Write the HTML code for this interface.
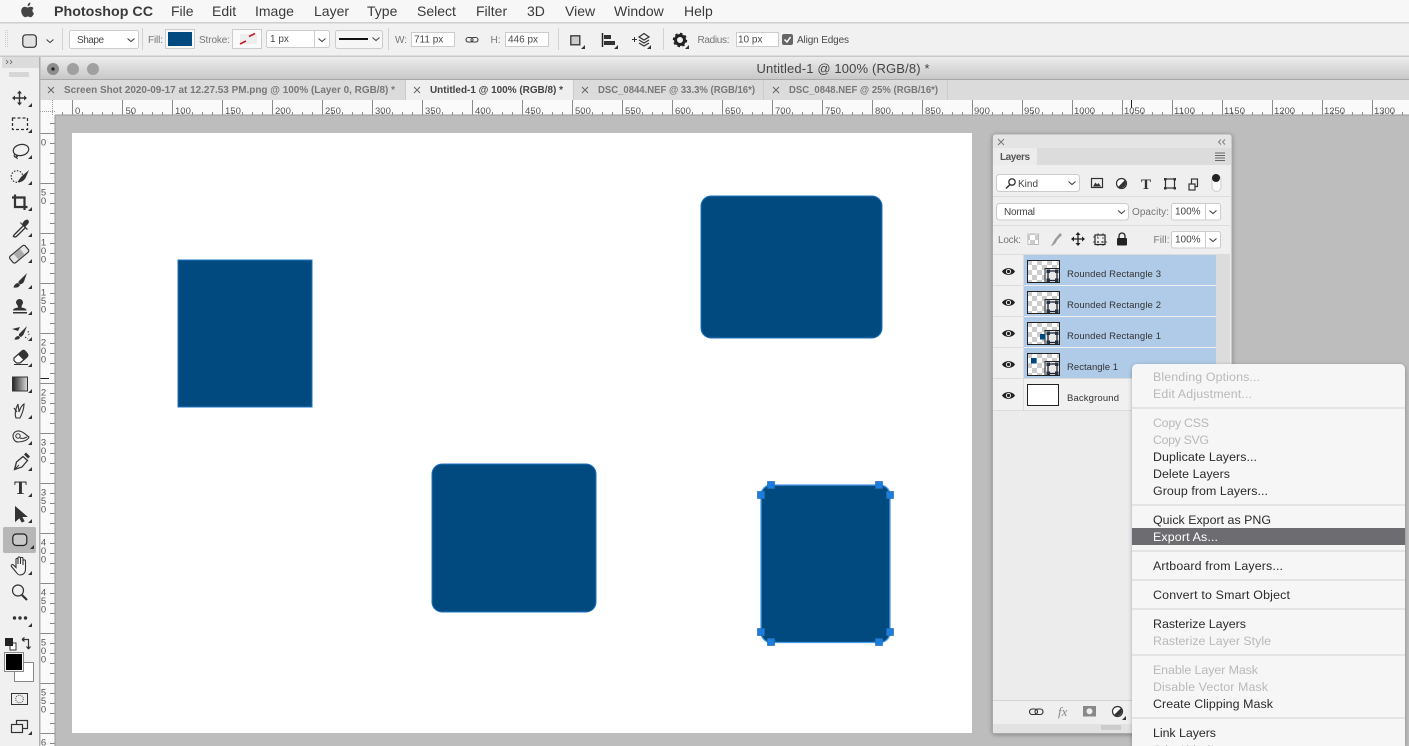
<!DOCTYPE html>
<html><head><meta charset="utf-8"><title>Photoshop CC</title>
<style>
html,body{margin:0;padding:0;width:1409px;height:746px;overflow:hidden;background:#bdbdbd}
svg{display:block;font-family:"Liberation Sans",sans-serif;filter:blur(.3px)}
.m{font-size:14px;fill:#3a3a3a}
.o{font-size:10px;fill:#4a4a4a}
.ol{font-size:10px;fill:#777}
.t{font-size:10px;font-weight:bold;fill:#777}
.r{font-size:9.5px;fill:#555}
.v{font-size:9.5px;fill:#555;text-anchor:middle}
.l{font-size:9.5px;fill:#333}
.c{font-size:12.4px;fill:#2a2a2a}
.d{font-size:12.4px;fill:#b9b9b9}
.ic{fill:none;stroke:#333;stroke-width:1.5}
.k{fill:#333}
</style></head><body>
<svg width="1409" height="746" viewBox="0 0 1409 746" xmlns="http://www.w3.org/2000/svg">
<defs>
<pattern id="hm" x="72" y="112" width="10" height="3" patternUnits="userSpaceOnUse"><rect width="1" height="3" fill="#888"/></pattern>
<pattern id="hM" x="72" y="100" width="50" height="15" patternUnits="userSpaceOnUse"><rect width="1" height="15" fill="#8a8a8a"/></pattern>
<pattern id="vm" x="50" y="133" width="5" height="10" patternUnits="userSpaceOnUse"><rect width="5" height="1" fill="#888"/></pattern>
<pattern id="vM" x="40" y="133" width="15" height="50" patternUnits="userSpaceOnUse"><rect width="15" height="1" fill="#8a8a8a"/></pattern>
<pattern id="ck" width="10" height="10" patternUnits="userSpaceOnUse"><rect width="10" height="10" fill="#fff"/><rect width="5" height="5" fill="#ccc"/><rect x="5" y="5" width="5" height="5" fill="#ccc"/></pattern>
<linearGradient id="tb" x1="0" y1="0" x2="0" y2="1"><stop offset="0" stop-color="#ececec"/><stop offset="1" stop-color="#c8c8c8"/></linearGradient>
<linearGradient id="gr" x1="0" y1="0" x2="1" y2="0"><stop offset="0" stop-color="#222"/><stop offset="1" stop-color="#ddd"/></linearGradient>
<filter id="sh" x="-10%" y="-10%" width="120%" height="120%"><feDropShadow dx="0" dy="1" stdDeviation="2" flood-color="#000" flood-opacity=".3"/></filter>
<g id="thumb"><rect x=".5" y=".5" width="32" height="22" fill="url(#ck)" stroke="#222"/><rect x="18" y="8.500" width="14.500" height="14" fill="#e8e8e8" stroke="#222"/><rect x="21" y="11" width="9" height="9.500" fill="none" stroke="#223" stroke-width="1.300"/><rect x="19.500" y="9.500" width="3.500" height="3.500" fill="#234"/><rect x="28" y="9.500" width="3.500" height="3.500" fill="#234"/><rect x="19.500" y="18.500" width="3.500" height="3.500" fill="#234"/><rect x="28" y="18.500" width="3.500" height="3.500" fill="#234"/></g>
<g id="eye"><path d="M-6.500 0C-4 -4.500 4 -4.500 6.500 0C4 4.500 -4 4.500 -6.500 0Z" fill="#222"/><circle r="2.600" fill="#eee"/><circle r="1.600" fill="#222"/></g>
<path id="tri" d="M0 0V-4L-4 0Z" fill="#333"/>
<path id="chev" d="M-3.500 -1.500L0 1.500L3.500 -1.500" fill="none" stroke="#444" stroke-width="1.100"/>
</defs>

<!-- base -->
<rect width="1409" height="746" fill="#bdbdbd"/>
<!-- menu bar -->
<rect width="1409" height="22" fill="#f7f7f7"/>
<rect y="22" width="1409" height="1.500" fill="#cfcfcf"/>
<path d="M30.500 6.800C29.300 6.800 28.700 7.500 27.700 7.500C26.700 7.500 26 6.800 24.800 6.800C23 6.800 21.200 8.300 21.200 11C21.200 13.800 23.500 17.200 25.200 17.200C26.200 17.200 26.700 16.500 27.900 16.500C29.100 16.500 29.500 17.200 30.500 17.200C32 17.200 33.400 14.900 34 13.200C32.400 12.500 31.700 9.500 33.600 8.200C32.900 7.200 31.700 6.800 30.500 6.800ZM30.300 2.500C28.800 2.700 27.500 4.100 27.700 6.200C29.200 6.200 30.600 4.600 30.300 2.500Z" fill="#444"/>
<text x="54" y="16" font-size="14" font-weight="bold" fill="#3a3a3a" textLength="99" lengthAdjust="spacingAndGlyphs">Photoshop CC</text>
<text class="m" x="171" y="16">File</text>
<text class="m" x="212" y="16">Edit</text>
<text class="m" x="255" y="16">Image</text>
<text class="m" x="314" y="16">Layer</text>
<text class="m" x="367" y="16">Type</text>
<text class="m" x="417" y="16">Select</text>
<text class="m" x="476" y="16">Filter</text>
<text class="m" x="527" y="16">3D</text>
<text class="m" x="565" y="16">View</text>
<text class="m" x="614" y="16">Window</text>
<text class="m" x="684" y="16">Help</text>

<!-- options bar -->
<rect y="23.500" width="1409" height="32" fill="#f1f1f1"/>
<rect y="55.500" width="1409" height="1.500" fill="#c9c9c9"/>
<path d="M5.500 30V48M7.500 30V48" stroke="#ccc" stroke-dasharray="1 1"/>
<rect x="22.800" y="34.800" width="13.500" height="12.500" rx="3" fill="#e2e2e2" stroke="#333" stroke-width="1.200"/>
<use href="#chev" x="50" y="41"/>
<path d="M62.500 28V50M142.500 28V50M388.500 28V50M558.500 28V50M663.500 28V50" stroke="#d2d2d2"/>
<rect x="69.500" y="30.500" width="69" height="18" rx="2" fill="#fff" stroke="#ccc"/>
<text class="o" x="77" y="43" textLength="27">Shape</text>
<use href="#chev" x="131" y="40"/>
<text class="ol" x="148" y="43" textLength="15">Fill:</text>
<rect x="165.500" y="29.500" width="29" height="19" fill="#f8f8f8" stroke="#ccc"/>
<rect x="168" y="32" width="24" height="14" fill="#004a80"/>
<text class="ol" x="199" y="43" textLength="31">Stroke:</text>
<rect x="232.500" y="29.500" width="29" height="19" fill="#fafafa" stroke="#ccc"/>
<rect x="240" y="34" width="17" height="10" fill="#eee"/>
<path d="M240 44L246 41M249 36.500L255 33.500" stroke="#c8202a" stroke-width="1.800"/>
<rect x="266.500" y="30.500" width="63" height="17" rx="2" fill="#fff" stroke="#ccc"/>
<path d="M314.500 31V47" stroke="#ccc"/>
<text class="o" x="270" y="42">1 px</text>
<use href="#chev" x="322" y="40"/>
<rect x="335.500" y="30.500" width="47" height="18" rx="2" fill="#f6f6f6" stroke="#ccc"/>
<rect x="339" y="38" width="29" height="2" fill="#111"/>
<use href="#chev" x="376" y="39"/>
<text class="ol" x="395" y="43">W:</text>
<rect x="411.500" y="32.500" width="43" height="14" fill="#fff" stroke="#ccc"/>
<text class="o" x="414" y="42.500">711 px</text>
<g fill="none" stroke="#444" stroke-width="1.100"><rect x="466" y="37.500" width="7" height="4.500" rx="2.200"/><rect x="471" y="37.500" width="7" height="4.500" rx="2.200"/></g>
<text class="ol" x="490.500" y="43">H:</text>
<rect x="505.500" y="32.500" width="43" height="14" fill="#fff" stroke="#ccc"/>
<text class="o" x="508" y="42.500">446 px</text>
<rect x="570.800" y="35.800" width="9" height="9" fill="#ccc" stroke="#333" stroke-width="1.300"/>
<use href="#tri" x="585" y="49"/>
<path d="M602.500 33V47" stroke="#222" stroke-width="1.500"/><rect x="604" y="35" width="7" height="4" fill="#333"/><rect x="604" y="41" width="11" height="4" fill="#333"/>
<use href="#tri" x="618" y="49"/>
<g fill="none" stroke="#333" stroke-width="1.200"><path d="M639 37L644 33.500L649 37L644 40Z"/><path d="M639 40L644 43L649 40"/><path d="M639 43L644 46L649 43"/></g><path d="M632 39.500H637M634.500 37V42" stroke="#333"/>
<use href="#tri" x="651" y="49"/>
<circle cx="680" cy="40" r="4.500" fill="none" stroke="#222" stroke-width="3"/>
<circle cx="680" cy="40" r="6.300" fill="none" stroke="#222" stroke-width="1.800" stroke-dasharray="2.500 2.400"/>
<use href="#tri" x="689" y="49"/>
<text class="ol" x="697.500" y="43" textLength="32">Radius:</text>
<rect x="736.500" y="32.500" width="42" height="14" fill="#fff" stroke="#ccc"/>
<text class="o" x="738" y="42.500">10 px</text>
<rect x="782" y="34" width="11" height="11" rx="2" fill="#666"/>
<path d="M784.500 39.500L787 42L790.500 37" fill="none" stroke="#fff" stroke-width="1.500"/>
<text class="o" x="797" y="43" textLength="52">Align Edges</text>

<!-- doc title -->
<rect x="40" y="57" width="1369" height="22" fill="url(#tb)"/>
<rect x="40" y="79" width="1369" height="1" fill="#a8a8a8"/>
<circle cx="53" cy="69" r="6" fill="#8d8d8d"/><circle cx="53" cy="69" r="1.600" fill="#222"/>
<circle cx="73" cy="69" r="6" fill="#a0a0a0"/><circle cx="93" cy="69" r="6" fill="#a0a0a0"/>
<text x="756.500" y="73" font-size="13" fill="#444" textLength="173">Untitled-1 @ 100% (RGB/8) *</text>

<!-- tabs -->
<rect x="40" y="80" width="1369" height="20" fill="#dbdbdb"/>
<rect x="406" y="80" width="167" height="20" fill="#efefef"/>
<path d="M405.500 80V100M573.500 80V100M763.500 80V100M947.500 80V100" stroke="#cbcbcb"/>
<g stroke="#666" stroke-width="1" fill="none"><path d="M48 87L54 93M54 87L48 93"/><path d="M414 87L420 93M420 87L414 93"/><path d="M582 87L588 93M588 87L582 93"/><path d="M773 87L779 93M779 87L773 93"/></g>
<text class="t" x="64" y="93" textLength="331" lengthAdjust="spacingAndGlyphs">Screen Shot 2020-09-17 at 12.27.53 PM.png @ 100% (Layer 0, RGB/8) *</text>
<text class="t" x="430" y="93" textLength="133" lengthAdjust="spacingAndGlyphs" style="fill:#444">Untitled-1 @ 100% (RGB/8) *</text>
<text class="t" x="598" y="93" textLength="157" lengthAdjust="spacingAndGlyphs">DSC_0844.NEF @ 33.3% (RGB/16*)</text>
<text class="t" x="789" y="93" textLength="149" lengthAdjust="spacingAndGlyphs">DSC_0848.NEF @ 25% (RGB/16*)</text>

<!-- horizontal ruler -->
<rect x="40" y="100" width="1369" height="15" fill="#fafafa"/>
<rect x="55" y="112" width="1354" height="3" fill="url(#hm)"/>
<rect x="55" y="100" width="1354" height="15" fill="url(#hM)"/>
<path d="M40 111.500H55M52.500 100V115" stroke="#999" stroke-dasharray="1 1"/>
<rect x="55" y="114.500" width="1354" height="1" fill="#999"/>
<rect x="1131" y="100" width="1" height="8" fill="#222"/>
<text class="r" x="75" y="114">0</text><text class="r" x="125.500" y="114">50</text><text class="r" x="175" y="114">100</text><text class="r" x="225" y="114">150</text><text class="r" x="275" y="114">200</text><text class="r" x="325" y="114">250</text><text class="r" x="375" y="114">300</text><text class="r" x="425" y="114">350</text><text class="r" x="475" y="114">400</text><text class="r" x="525" y="114">450</text><text class="r" x="575" y="114">500</text><text class="r" x="625" y="114">550</text><text class="r" x="675" y="114">600</text><text class="r" x="725" y="114">650</text><text class="r" x="775" y="114">700</text><text class="r" x="825" y="114">750</text><text class="r" x="875" y="114">800</text><text class="r" x="925" y="114">850</text><text class="r" x="974" y="114">900</text><text class="r" x="1024" y="114">950</text><text class="r" x="1074" y="114" textLength="21">1000</text><text class="r" x="1124" y="114" textLength="21">1050</text><text class="r" x="1174" y="114" textLength="21">1100</text><text class="r" x="1224" y="114" textLength="21">1150</text><text class="r" x="1274" y="114" textLength="21">1200</text><text class="r" x="1324" y="114" textLength="21">1250</text><text class="r" x="1374" y="114" textLength="21">1300</text>

<!-- vertical ruler -->
<rect x="40" y="115" width="15" height="631" fill="#fafafa"/>
<rect x="50" y="115" width="5" height="631" fill="url(#vm)"/>
<rect x="40" y="115" width="15" height="631" fill="url(#vM)"/>
<rect x="54.500" y="115" width="1" height="631" fill="#999"/>
<rect x="40" y="378" width="9" height="1" fill="#222"/>
<text class="v" x="43.500" y="145.500">0</text>
<text class="v" x="43.500" y="195.500">5</text><text class="v" x="43.500" y="204">0</text>
<text class="v" x="43.500" y="245.500">1</text><text class="v" x="43.500" y="254">0</text><text class="v" x="43.500" y="262.500">0</text>
<text class="v" x="43.500" y="295.500">1</text><text class="v" x="43.500" y="304">5</text><text class="v" x="43.500" y="312.500">0</text>
<text class="v" x="43.500" y="345.500">2</text><text class="v" x="43.500" y="354">0</text><text class="v" x="43.500" y="362.500">0</text>
<text class="v" x="43.500" y="395.500">2</text><text class="v" x="43.500" y="404">5</text><text class="v" x="43.500" y="412.500">0</text>
<text class="v" x="43.500" y="445.500">3</text><text class="v" x="43.500" y="454">0</text><text class="v" x="43.500" y="462.500">0</text>
<text class="v" x="43.500" y="495.500">3</text><text class="v" x="43.500" y="504">5</text><text class="v" x="43.500" y="512.500">0</text>
<text class="v" x="43.500" y="545.500">4</text><text class="v" x="43.500" y="554">0</text><text class="v" x="43.500" y="562.500">0</text>
<text class="v" x="43.500" y="595.500">4</text><text class="v" x="43.500" y="604">5</text><text class="v" x="43.500" y="612.500">0</text>
<text class="v" x="43.500" y="645.500">5</text><text class="v" x="43.500" y="654">0</text><text class="v" x="43.500" y="662.500">0</text>
<text class="v" x="43.500" y="695.500">5</text><text class="v" x="43.500" y="704">5</text><text class="v" x="43.500" y="712.500">0</text>
<text class="v" x="43.500" y="745.500">6</text>

<!-- tools panel -->
<rect x="0" y="57" width="39" height="689" fill="#f0f0f0"/>
<rect x="39" y="57" width="1.500" height="689" fill="#b0b0b0"/>
<rect x="2" y="57" width="37" height="11" fill="#dcdcdc"/>
<path d="M6 60L8 62L6 64M10 60L12 62L10 64" fill="none" stroke="#666" stroke-width=".8"/>
<path d="M10 72V77M12 72V77M14 72V77M16 72V77M18 72V77M20 72V77M22 72V77M24 72V77M26 72V77M28 72V77" stroke="#999" stroke-width=".6"/>
<!-- move -->
<path d="M13 98H26M19.500 91.500V104.500" stroke="#333" stroke-width="1.400"/>
<path d="M12 98L15 95.500V100.500ZM27 98L24 95.500V100.500ZM19.500 90.500L17 93.500H22ZM19.500 105.500L17 102.500H22Z" class="k"/>
<use href="#tri" x="32" y="107"/>
<!-- marquee -->
<rect x="12.500" y="118" width="15" height="11.500" fill="none" stroke="#333" stroke-width="1.300" stroke-dasharray="3 2"/>
<use href="#tri" x="32" y="133"/>
<!-- lasso -->
<ellipse cx="21" cy="150" rx="7.800" ry="5.500" fill="none" stroke="#333" stroke-width="1.200" transform="rotate(-12 21 150)"/>
<path d="M15 154C13 156 15 158 17 157C18 156 16.500 154.500 16 156C16 157.500 17 158.500 17.500 159" fill="none" stroke="#333" stroke-width="1.100"/>
<use href="#tri" x="32" y="159"/>
<!-- quick selection -->
<circle cx="17" cy="176.500" r="5.800" fill="none" stroke="#333" stroke-width="1.200" stroke-dasharray="1.500 1.500"/>
<path d="M29 170L22 176C20 178 19 180 17.500 182C21 183 25 180 26 177Z" class="k"/>
<use href="#tri" x="32" y="185"/>
<!-- crop -->
<path d="M15 194.500V207H27.500M12 197.500H24.500V210" fill="none" stroke="#333" stroke-width="2.200"/>
<use href="#tri" x="32" y="211"/>
<!-- eyedropper -->
<path d="M23 226L15 234C13 236 13 237 14 236.500C15 237.500 16 237 18 235L26 227" fill="none" stroke="#333" stroke-width="1.300"/>
<path d="M22 224L24 221C25.500 219.500 28 219 28.500 220.500C29.500 222 28.500 223.500 27 225L25 227L28 229L27 230L20 223L21 222Z" class="k"/>
<use href="#tri" x="32" y="237"/>
<!-- healing -->
<g transform="rotate(-40 19 254)"><rect x="9" y="250" width="20" height="8.500" rx="2" fill="#e6e6e6" stroke="#333" stroke-width="1.200"/><rect x="15" y="250.500" width="8" height="7.500" fill="#aaa"/></g>
<use href="#tri" x="32" y="263"/>
<!-- brush -->
<path d="M27 273L20 280C19 281 18 282 18.500 283L20 284.500C22 284 23.500 283 24 281.500ZM18 283C16 283 14 285 13.500 287.500C16 288 19 287.500 20 285Z" class="k"/>
<use href="#tri" x="32" y="289"/>
<!-- stamp -->
<path d="M19.500 299A3.500 3.500 0 0 1 23 302.500C23 304 21.500 305 21.500 307.500C24 308 26.500 308.500 26.500 310.500H13C13 308.500 15.500 308 18 307.500C18 305 16 304 16 302.500A3.500 3.500 0 0 1 19.500 299Z" class="k"/><rect x="13" y="312" width="14" height="1.500" fill="#333"/>
<use href="#tri" x="32" y="315"/>
<!-- history brush -->
<path d="M27 326L20 333C19 334 18.500 335 19 336L20.500 337C22 336.500 23.500 335 24 333.500ZM18.500 336C16.500 336 15 337.500 14.500 339.500C16.500 340 19.500 339.500 20 337.500Z" class="k"/>
<path d="M12 329L20 327L18 331ZM14 333H18" class="k"/><path d="M28 331L29 335M25 337L28 339" stroke="#333" fill="none" stroke-dasharray="1.500 1.500"/>
<use href="#tri" x="32" y="341"/>
<!-- eraser -->
<path d="M14 358L22 351C23 350 24 350 25 351L27.500 354C28 355 28 356 27 357L20 363H16.500L14 360.500Z" fill="#fff" stroke="#333" stroke-width="1.200"/><path d="M22 351C23 350 24 350 25 351L27.500 354C28 355 28 356 27 357L23.500 360L18 354.500Z" class="k"/><rect x="14" y="364" width="14" height="1" fill="#333"/>
<use href="#tri" x="32" y="367"/>
<!-- gradient -->
<rect x="12.500" y="377" width="15" height="14" fill="url(#gr)" stroke="#333"/>
<use href="#tri" x="32" y="393"/>
<!-- smudge -->
<path d="M16 418C14 413 16 408 18 404C18 407 19 409 19 412C20 409 21 406 24 404C24 408 22 414 20 418ZM17 412L14 408" fill="none" stroke="#333" stroke-width="1.100"/>
<use href="#tri" x="32" y="419"/>
<!-- sponge/dodge -->
<path d="M13 436C13 432 17 430 21 431.500C25 433 27 436 29 437C28 440 23 442 18 442C15 442 13 439 13 436Z" fill="none" stroke="#333" stroke-width="1.100"/><circle cx="18" cy="436" r="2.200" fill="none" stroke="#333"/><path d="M20 438C23 439 25 438 27 437" stroke="#333" fill="none"/>
<use href="#tri" x="32" y="445"/>
<!-- pen -->
<path d="M23 456.500L27.500 460.500L22 467L14.500 469.500L16.500 462Z" fill="none" stroke="#333" stroke-width="1.300"/><path d="M14.500 469.500L19 465" stroke="#333"/><path d="M24 454.500L26 452.500L30 456.500L28 458.500Z" class="k"/>
<use href="#tri" x="32" y="471"/>
<!-- type -->
<text x="20.500" y="494" font-family="Liberation Serif" font-size="19" font-weight="bold" fill="#333" text-anchor="middle">T</text>
<use href="#tri" x="32" y="497"/>
<!-- arrow -->
<path d="M15.500 507V521L19.500 517.500L22 522L24 521L21.500 516.500H26.500Z" class="k" stroke="#333"/>
<use href="#tri" x="32" y="523"/>
<!-- rounded rect tool -->
<rect x="3" y="527" width="33" height="26" rx="2" fill="#b7b7b7"/>
<rect x="12.800" y="534" width="14" height="11.500" rx="3.500" fill="#c9c9c9" stroke="#222" stroke-width="1.200"/>
<use href="#tri" x="34" y="549"/>
<!-- hand -->
<path d="M16 572L11.500 566.500C10.500 565 12.500 564 13.500 565L16 567.500V559.500C16 558 18 558 18 559.500V564V558C18 556.500 20 556.500 20.500 558V564V558.500C20.500 557 23 557 23 558.500V565V561C23 559.500 25.500 559.500 25.500 561V569C25.500 573 23 575 20 575C18 575 17 573.500 16 572Z" fill="#f4f4f4" stroke="#333" stroke-width="1.100"/>
<use href="#tri" x="32" y="575"/>
<!-- zoom -->
<circle cx="18" cy="590.500" r="5.500" fill="none" stroke="#333" stroke-width="1.200"/>
<path d="M22 595L27 600" stroke="#333" stroke-width="2.200"/>
<!-- dots -->
<circle cx="14.500" cy="618" r="1.700" class="k"/><circle cx="20" cy="618" r="1.700" class="k"/><circle cx="25.500" cy="618" r="1.700" class="k"/>
<use href="#tri" x="32" y="627"/>
<!-- default colors -->
<rect x="10" y="643" width="6" height="7" fill="#fff" stroke="#333"/>
<rect x="5" y="638" width="8" height="8" fill="#222"/>
<path d="M22 639.500H28.500V648M22 639.500L24.500 637.500M22 639.500L24.500 641.500M28.500 649L26.500 646.500M28.500 649L30.500 646.500" fill="none" stroke="#333" stroke-width="1.200"/>
<!-- fg bg -->
<rect x="14.500" y="662.500" width="19" height="19" fill="#fff" stroke="#888"/>
<rect x="4.500" y="652.500" width="19" height="19" fill="#f4f4f4" stroke="#888"/>
<rect x="6" y="654" width="16" height="16" fill="#000"/>
<!-- quick mask -->
<rect x="11.500" y="693.500" width="16" height="11" fill="#eee" stroke="#333"/>
<circle cx="19.500" cy="699" r="3.800" fill="none" stroke="#555" stroke-dasharray="1 1"/>
<!-- screen mode -->
<rect x="16.500" y="720.500" width="11" height="8" fill="#eee" stroke="#333" stroke-width="1.200"/>
<rect x="11.500" y="724.500" width="11" height="8" fill="#eee" stroke="#333" stroke-width="1.200"/>
<use href="#tri" x="32" y="735"/>

<!-- document -->
<rect x="72" y="133" width="900" height="600" fill="#fff"/>
<g fill="#004a80" stroke="#1b73c4" stroke-width="1">
<rect x="178" y="260" width="134" height="147"/>
<rect x="701" y="196" width="181" height="142" rx="10"/>
<rect x="432" y="464" width="164" height="148" rx="10"/>
<rect x="761" y="485" width="129" height="157.500" rx="10" stroke="#4a9bea" stroke-width="1.300"/>
</g>
<g fill="#1b7de0" stroke="#2a6cab" stroke-width=".7">
<rect x="767.500" y="481.500" width="7" height="7"/><rect x="875.500" y="481.500" width="7" height="7"/>
<rect x="757.500" y="491.500" width="7" height="7"/><rect x="886.500" y="491.500" width="7" height="7"/>
<rect x="757.500" y="628.500" width="7" height="7"/><rect x="886.500" y="628.500" width="7" height="7"/>
<rect x="767.500" y="638.500" width="7" height="7"/><rect x="875.500" y="638.500" width="7" height="7"/>
</g>

<!-- layers panel -->
<rect x="992.500" y="134" width="239.500" height="599.500" rx="3" fill="#ececec" stroke="#a9a9a9" filter="url(#sh)"/>
<rect x="993" y="135" width="238" height="13" rx="2" fill="#e4e4e4"/>
<path d="M998 139L1004 145M1004 139L998 145" stroke="#777"/>
<path d="M1221 139.500L1218.500 142L1221 144.500M1225 139.500L1222.500 142L1225 144.500" fill="none" stroke="#777" stroke-width=".9"/>
<rect x="993" y="148" width="238" height="17" fill="#dcdcdc"/>
<rect x="993" y="148" width="44" height="17" fill="#ececec"/>
<text x="1000" y="160" font-size="10" font-weight="bold" fill="#555" textLength="30">Layers</text>
<path d="M1215 153H1225M1215 155.500H1225M1215 158H1225M1215 160.500H1225" stroke="#666" stroke-width=".9"/>
<rect x="993" y="165" width="237" height="90" fill="#efefef"/>
<path d="M993 196.500H1230M993 225.500H1230M993 254.500H1230" stroke="#dcdcdc"/>
<rect x="996.500" y="174.500" width="83" height="17" rx="3" fill="#fff" stroke="#ccc"/>
<circle cx="1012" cy="182" r="3.200" fill="none" stroke="#333" stroke-width="1.300"/><path d="M1010 184.500L1006 188.500" stroke="#333" stroke-width="1.500"/>
<text x="1018" y="187" font-size="10" fill="#444" textLength="20">Kind</text>
<use href="#chev" x="1072" y="183"/>
<rect x="1091.500" y="178.500" width="11" height="9" fill="none" stroke="#333" stroke-width="1.200"/><path d="M1093 186.500L1095.500 182.500L1097 184.500L1098.500 183L1101 186.500Z" class="k"/>
<circle cx="1121.500" cy="183.500" r="5" fill="#fff" stroke="#333" stroke-width="1.200"/><path d="M1125 180L1118 187A5 5 0 0 0 1125 180Z" class="k"/>
<text x="1146" y="189" font-family="Liberation Serif" font-size="15" font-weight="bold" fill="#333" text-anchor="middle">T</text>
<rect x="1165.500" y="179" width="9" height="9" fill="none" stroke="#333" stroke-width="1.200"/><g class="k"><rect x="1164" y="178" width="2.500" height="2.500"/><rect x="1173.500" y="178" width="2.500" height="2.500"/><rect x="1164" y="187" width="2.500" height="2.500"/><rect x="1173.500" y="187" width="2.500" height="2.500"/></g>
<rect x="1191.500" y="179" width="6" height="7.500" fill="#eee" stroke="#333" stroke-width="1.200"/><rect x="1189" y="184" width="6" height="6" fill="#eee" stroke="#333" stroke-width="1.200"/>
<rect x="1212" y="175" width="9" height="16.500" rx="4.500" fill="#fafafa" stroke="#ccc"/><circle cx="1216" cy="178" r="4" fill="#222"/>
<rect x="996.500" y="203.500" width="132" height="16.500" rx="3" fill="#fff" stroke="#ccc"/>
<text x="1004" y="215" font-size="10" fill="#444" textLength="31">Normal</text>
<use href="#chev" x="1121.500" y="212"/>
<text x="1132" y="215" font-size="10" fill="#777" textLength="37">Opacity:</text>
<rect x="1171.500" y="203.500" width="49" height="16.500" rx="2" fill="#fff" stroke="#ccc"/><path d="M1205.500 204V220" stroke="#ccc"/>
<text x="1175" y="214.500" font-size="10" fill="#444">100%</text><use href="#chev" x="1213" y="212"/>
<text x="998" y="243" font-size="10" fill="#777" textLength="23">Lock:</text>
<rect x="1028" y="234" width="10.500" height="10.500" fill="url(#ck)" stroke="#bbb"/>
<path d="M1060 233L1055 239L1051 246C1054 245 1056 243 1057 240L1062 235Z" fill="#999"/>
<path d="M1072 239H1084M1078 233V245" stroke="#222" stroke-width="1.300"/><path d="M1071 239L1074 236.500V241.500ZM1085 239L1082 236.500V241.500ZM1078 232L1075.500 235H1080.500ZM1078 246L1075.500 243H1080.500Z" fill="#222"/>
<rect x="1095" y="235" width="10" height="9.500" fill="none" stroke="#222" stroke-width="1.200"/><path d="M1093 237H1098M1093 242H1107M1098 233V246M1103 233V246" stroke="#222" stroke-width=".7" stroke-dasharray="2 2"/>
<rect x="1117" y="238" width="10" height="7.500" rx="1" fill="#222"/><path d="M1119 238V236A3 3 0 0 1 1125 236V238" fill="none" stroke="#222" stroke-width="1.300"/>
<text x="1153.500" y="243" font-size="10" fill="#777" textLength="16">Fill:</text>
<rect x="1171.500" y="231.500" width="49" height="16.500" rx="2" fill="#fff" stroke="#ccc"/><path d="M1205.500 232V248" stroke="#ccc"/>
<text x="1175" y="242.500" font-size="10" fill="#444">100%</text><use href="#chev" x="1213" y="240"/>

<!-- layers list -->
<rect x="1216" y="255" width="14" height="445" fill="#dcdcdc"/>
<rect x="993" y="255" width="223" height="155" fill="#f0f0f0"/>
<g fill="#b0cbe8"><rect x="1024" y="255" width="192" height="30"/><rect x="1024" y="286" width="192" height="30"/><rect x="1024" y="317" width="192" height="30"/><rect x="1024" y="348" width="192" height="30"/></g>
<path d="M993 285.500H1024M993 316.500H1024M993 347.500H1024M993 378.500H1216M993 410.500H1216" stroke="#dcdcdc"/>
<path d="M1023.500 255V410" stroke="#dcdcdc"/>
<use href="#eye" x="1008.500" y="271.500"/><use href="#eye" x="1008.500" y="302.500"/><use href="#eye" x="1008.500" y="333.500"/><use href="#eye" x="1008.500" y="364.500"/><use href="#eye" x="1008.500" y="395.500"/>
<use href="#thumb" x="1027" y="260"/><use href="#thumb" x="1027" y="291"/><use href="#thumb" x="1027" y="322"/><use href="#thumb" x="1027" y="353"/>
<rect x="1040" y="334" width="5.500" height="5.500" fill="#004a80"/>
<rect x="1031" y="358" width="5.500" height="5.500" fill="#004a80"/>
<rect x="1027.500" y="384.500" width="31" height="21" fill="#fff" stroke="#222"/>
<text class="l" x="1067" y="277" textLength="94">Rounded Rectangle 3</text>
<text class="l" x="1067" y="308" textLength="94">Rounded Rectangle 2</text>
<text class="l" x="1067" y="339" textLength="94">Rounded Rectangle 1</text>
<text class="l" x="1067" y="370" textLength="51">Rectangle 1</text>
<text class="l" x="1067" y="401" textLength="52">Background</text>
<rect x="993" y="700" width="238" height="1" fill="#d4d4d4"/>
<rect x="993" y="701" width="238" height="23" fill="#efefef"/>
<rect x="993" y="724" width="238" height="9" fill="#e2e2e2"/>
<path d="M1102 725V730M1104 725V730M1106 725V730M1108 725V730M1110 725V730M1112 725V730M1114 725V730M1116 725V730M1118 725V730M1120 725V730" stroke="#999" stroke-width=".6"/>
<g fill="none" stroke="#333" stroke-width="1.100"><rect x="1029.500" y="709" width="8" height="5.500" rx="2.700"/><rect x="1035" y="709" width="8" height="5.500" rx="2.700"/></g>
<text x="1058" y="716" font-family="Liberation Serif" font-size="13" font-style="italic" fill="#888">fx</text>
<rect x="1083" y="706" width="13" height="10.500" fill="#888"/><circle cx="1089.500" cy="711.200" r="3" fill="#eee"/>
<circle cx="1117.500" cy="711.500" r="5" fill="#fff" stroke="#333" stroke-width="1.200"/><path d="M1121 708L1114 715A5 5 0 0 0 1121 708Z" class="k"/>
<use href="#tri" x="1126" y="720"/>

<!-- context menu -->
<path d="M1132 746V369A5 5 0 0 1 1137 364H1400A5 5 0 0 1 1405 369V746Z" fill="#f6f6f6" filter="url(#sh)"/>
<g fill="#e4e4e4"><rect x="1132" y="407" width="273" height="2"/><rect x="1132" y="504" width="273" height="2"/><rect x="1132" y="550" width="273" height="2"/><rect x="1132" y="579" width="273" height="2"/><rect x="1132" y="608" width="273" height="2"/><rect x="1132" y="654" width="273" height="2"/><rect x="1132" y="717" width="273" height="2"/></g>
<rect x="1132" y="528" width="273" height="17" fill="#6d6d71"/>
<text class="d" x="1153" y="381" textLength="107">Blending Options...</text>
<text class="d" x="1153" y="398" textLength="99">Edit Adjustment...</text>
<text class="d" x="1153" y="427" textLength="56">Copy CSS</text>
<text class="d" x="1153" y="444" textLength="56">Copy SVG</text>
<text class="c" x="1153" y="461" textLength="104">Duplicate Layers...</text>
<text class="c" x="1153" y="478" textLength="77">Delete Layers</text>
<text class="c" x="1153" y="495" textLength="115">Group from Layers...</text>
<text class="c" x="1153" y="524" textLength="118">Quick Export as PNG</text>
<text class="c" x="1153" y="541" textLength="65" style="fill:#fff">Export As...</text>
<text class="c" x="1153" y="570" textLength="130">Artboard from Layers...</text>
<text class="c" x="1153" y="599" textLength="137">Convert to Smart Object</text>
<text class="c" x="1153" y="628" textLength="93">Rasterize Layers</text>
<text class="d" x="1153" y="645" textLength="118">Rasterize Layer Style</text>
<text class="d" x="1153" y="674" textLength="105">Enable Layer Mask</text>
<text class="d" x="1153" y="691" textLength="115">Disable Vector Mask</text>
<text class="c" x="1153" y="708" textLength="120">Create Clipping Mask</text>
<text class="c" x="1153" y="737" textLength="63">Link Layers</text>
<text class="d" x="1153" y="754" textLength="88">Select Linked Layers</text>
</svg>
</body></html>
